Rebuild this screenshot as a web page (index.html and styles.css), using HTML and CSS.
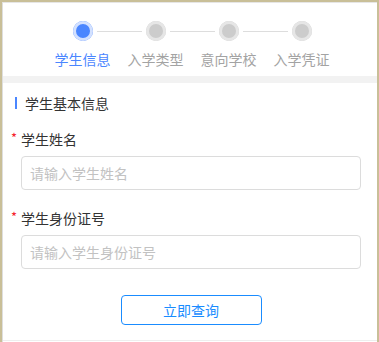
FILE: index.html
```html
<!DOCTYPE html>
<html lang="zh-CN">
<head>
    <meta charset="UTF-8">
    <meta name="viewport" content="width=device-width, initial-scale=1.0">
    <title>学生信息查询</title>
    <link rel="stylesheet" href="styles.css">
</head>
<body>

    <div class="frame">
        <div class="steps">
            <div class="dots">
                <span class="dot active"></span>
                <span class="line"></span>
                <span class="dot"></span>
                <span class="line"></span>
                <span class="dot"></span>
                <span class="line"></span>
                <span class="dot"></span>
            </div>
            <div class="labels">
                <span class="label active">学生信息</span>
                <span class="label">入学类型</span>
                <span class="label">意向学校</span>
                <span class="label">入学凭证</span>
            </div>
        </div>

        <div class="band"></div>

        <h3 class="section-title">学生基本信息</h3>

        <form class="form">
            <label class="field-label"><span class="req">*</span>学生姓名</label>
            <input type="text" class="field-input" placeholder="请输入学生姓名">

            <label class="field-label second"><span class="req">*</span>学生身份证号</label>
            <input type="text" class="field-input" placeholder="请输入学生身份证号">

            <div class="actions">
                <button type="button" class="btn-query">立即查询</button>
            </div>
        </form>

        <div class="bottom-line"></div>
    </div>

</body>
</html>
```

FILE: styles.css
```css
html, body { margin: 0; height: 100%; }
body {
    background: #c9bf98;
    padding: 2px 2px 0 2px;
    box-sizing: border-box;
    font-family: "Noto Sans CJK SC", "Microsoft YaHei", sans-serif;
    font-size: 14px;
}
.frame {
    background: #fff;
    border-top: 1px solid #e6e6e6;
    border-left: 1px solid #dedede;
    height: 100%;
    box-sizing: border-box;
    display: flex;
    flex-direction: column;
}

/* steps */
.steps { padding: 18px 0 7px 4px; display: flex; flex-direction: column; align-items: center; }
.dots { display: flex; align-items: center; }
.dot {
    width: 20px; height: 20px; border-radius: 50%;
    background: #cccccc;
    box-shadow: inset 0 0 0 3px #e6e6e6;
}
.dot.active { background: #4a86ff; box-shadow: inset 0 0 0 3px #d3e1ff; }
.line { width: 45px; height: 1px; margin: 0 4px; background: #dddddd; }
.labels { display: flex; margin-top: 8px; }
.label { width: 73px; text-align: center; line-height: 20px; color: #a3a3a3; }
.label.active { color: #4a86ff; }

.band { height: 7px; background: #f2f2f2; }

.section-title {
    margin: 14px 0 0 12px;
    padding-left: 8px;
    border-left: 2px solid #4a86ff;
    font-size: 14px; font-weight: normal; color: #333;
    line-height: 12px; height: 12px;
    display: flex; align-items: center;
}

.form { padding: 20px 16px 0 18px; display: flex; flex-direction: column; }
.field-label { line-height: 20px; color: #333; display: flex; }
.field-label.second { margin-top: 18px; }
.req { width: 10px; margin-left: -10px; color: #f5222d; font-size: 13px; line-height: 18px; }
.field-input {
    margin-top: 7px;
    height: 34px;
    box-sizing: border-box;
    border: 1px solid #dcdcdc;
    border-radius: 4px;
    padding: 0 8px;
    font-family: inherit;
    font-size: 14px;
    color: #333;
    outline: none;
}
.field-input::placeholder { color: #c2c2c2; }

.actions { display: flex; justify-content: center; margin-top: 26px; }
.btn-query {
    width: 141px; height: 30px;
    background: #fff;
    border: 1px solid #1a8cff;
    border-radius: 4px;
    color: #1a8cff;
    font-family: inherit;
    font-size: 14px;
    padding: 0;
}

.bottom-line { margin-top: auto; height: 1px; border-top: 1px solid #eeeeee; }
```
